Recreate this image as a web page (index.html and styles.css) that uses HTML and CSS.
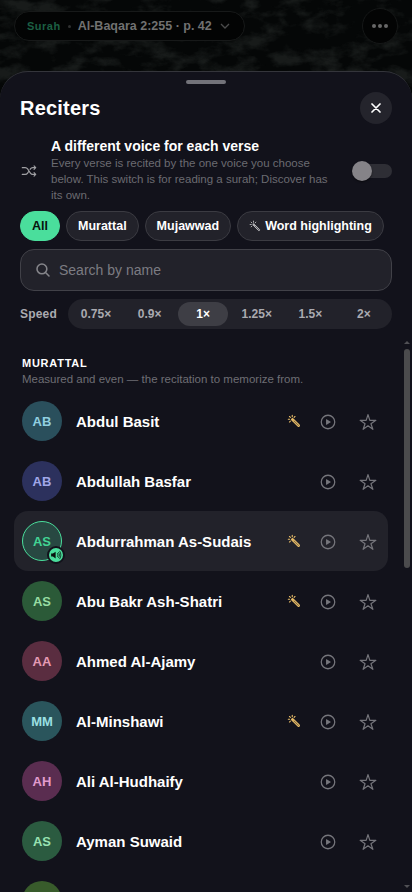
FILE: index.html
```
<!DOCTYPE html>
<html lang="en">
<head>
<meta charset="utf-8">
<meta name="viewport" content="width=device-width, initial-scale=1">
<title>Reciters</title>
<link rel="stylesheet" href="styles.css">
</head>
<body>
<svg class="defs" aria-hidden="true">
  <symbol id="play" viewBox="0 0 512 512"><path d="M448 256c0-106-86-192-192-192S64 150 64 256s86 192 192 192 192-86 192-192z" fill="none" stroke="currentColor" stroke-width="36"/><path fill="currentColor" d="M216.3 334.4l114.5-69.1a10.9 10.9 0 000-18.6l-114.5-69.1a10.8 10.8 0 00-16.3 9.3v138.2a10.8 10.8 0 0016.3 9.3z"/></symbol>
  <symbol id="star" viewBox="0 0 512 512"><path d="M480 208H308L256 48l-52 160H32l140 96-54 160 138-100 138 100-54-160z" fill="none" stroke="currentColor" stroke-width="34" stroke-linejoin="round"/></symbol>
  <symbol id="wand" viewBox="0 0 512 512"><g fill="none" stroke="currentColor" stroke-width="40" stroke-linecap="round"><rect x="280.5" y="122.9" width="63" height="378.2" rx="31.5" transform="rotate(-45 312 312)" fill="currentColor" fill-opacity=".4"/><path d="M48 192h48M90 90l34 34M192 48v48M294 90l-34 34M124 260l-34 34"/></g><path fill="currentColor" d="M178.4 178.4a31.6 31.6 0 000 44.7L223.3 268 268 223.3l-44.9-44.9a31.6 31.6 0 00-44.7 0z"/></symbol>
</svg>

<header class="backdrop">
  <svg class="texture" aria-hidden="true"><filter id="rock" x="0" y="0" width="100%" height="100%" color-interpolation-filters="sRGB"><feTurbulence type="fractalNoise" baseFrequency=".035 .06" numOctaves="5" seed="8"/><feColorMatrix values="0 0 0 0 .12  0 0 0 0 .135  0 0 0 0 .13  3.6 0 0 0 -1.6"/></filter><rect width="100%" height="100%" filter="url(#rock)"/></svg>
  <div class="place"><span class="place-kind">Surah</span><span class="place-dot"></span><span class="place-name">Al-Baqara 2:255 · p. 42</span><svg class="chevron" viewBox="0 0 10 10"><path d="M1 3l4 4 4-4"/></svg></div>
  <div class="more"><i></i><i></i><i></i></div>
</header>

<main class="sheet">
  <div class="handle"></div>
  <div class="heading"><h1>Reciters</h1><button class="close" aria-label="Close"><svg viewBox="0 0 10 10"><path d="M1 1l8 8M9 1l-8 8"/></svg></button></div>

  <section class="option">
    <svg class="shuffle" viewBox="0 0 512 512"><path d="M400 304l48 48-48 48M400 112l48 48-48 48M64 352h85.2a80 80 0 0066.5-35.6L256 256M64 160h85.2a80 80 0 0166.5 35.6l80.5 120.8A80 80 0 00362.8 352H416M416 160h-53.2a80 80 0 00-66.5 35.6L288 208"/></svg>
    <div class="option-text"><h2>A different voice for each verse</h2><p>Every verse is recited by the one voice you choose below. This switch is for reading a surah; Discover has its own.</p></div>
    <div class="switch"><i></i></div>
  </section>

  <nav class="chips">
    <button class="chip chip-on">All</button><button class="chip">Murattal</button><button class="chip">Mujawwad</button><button class="chip"><svg><use href="#wand"/></svg>Word highlighting</button>
  </nav>

  <div class="search"><svg viewBox="0 0 512 512"><path d="M221 64a157 157 0 10157 157A157 157 0 00221 64zM338 338l110 110"/></svg><span>Search by name</span></div>

  <div class="speed"><span class="speed-label">Speed</span>
    <div class="speeds"><span>0.75×</span><span>0.9×</span><span class="speed-on">1×</span><span>1.25×</span><span>1.5×</span><span>2×</span></div>
  </div>

  <div class="scroller">
    <section class="list">
      <h3>MURATTAL</h3>
      <p class="note">Measured and even — the recitation to memorize from.</p>
      <div class="row"><span class="avatar sea">AB</span><b>Abdul Basit</b><svg class="wand"><use href="#wand"/></svg><svg class="act"><use href="#play"/></svg><svg class="act"><use href="#star"/></svg></div>
      <div class="row"><span class="avatar indigo">AB</span><b>Abdullah Basfar</b><svg class="act"><use href="#play"/></svg><svg class="act"><use href="#star"/></svg></div>
      <div class="row row-on"><span class="avatar current">AS<span class="badge"><svg viewBox="0 0 512 512"><path d="M126 192H48v128h78l114 80V112z" fill="currentColor"/><path d="M320 320c10-19 16-41 16-64s-6-44-16-64M368 368c19-34 32-64 32-112s-12-78-32-112M416 416c30-46 48-91 48-160s-18-113-48-160" fill="none" stroke="currentColor" stroke-width="32" stroke-linecap="round"/></svg></span></span><b>Abdurrahman As-Sudais</b><svg class="wand"><use href="#wand"/></svg><svg class="act"><use href="#play"/></svg><svg class="act"><use href="#star"/></svg></div>
      <div class="row"><span class="avatar green">AS</span><b>Abu Bakr Ash-Shatri</b><svg class="wand"><use href="#wand"/></svg><svg class="act"><use href="#play"/></svg><svg class="act"><use href="#star"/></svg></div>
      <div class="row"><span class="avatar rose">AA</span><b>Ahmed Al-Ajamy</b><svg class="act"><use href="#play"/></svg><svg class="act"><use href="#star"/></svg></div>
      <div class="row"><span class="avatar teal">MM</span><b>Al-Minshawi</b><svg class="wand"><use href="#wand"/></svg><svg class="act"><use href="#play"/></svg><svg class="act"><use href="#star"/></svg></div>
      <div class="row"><span class="avatar plum">AH</span><b>Ali Al-Hudhaify</b><svg class="act"><use href="#play"/></svg><svg class="act"><use href="#star"/></svg></div>
      <div class="row"><span class="avatar emerald">AS</span><b>Ayman Suwaid</b><svg class="act"><use href="#play"/></svg><svg class="act"><use href="#star"/></svg></div>
      <div class="row"><span class="avatar olive"></span></div>
    </section>
    <div class="scrollbar"><i class="up"></i><i class="thumb"></i><i class="down"></i></div>
  </div>
</main>
</body>
</html>
```
FILE: styles.css
```
* { box-sizing: border-box; margin: 0; padding: 0; }
html, body { height: 100%; overflow: hidden; }
body {
  position: relative;
  width: 412px;
  height: 892px;
  display: flex;
  flex-direction: column;
  background: #050707;
  color: #fff;
  font-family: "Liberation Sans", Arial, sans-serif;
}
button { border: 0; font: inherit; color: inherit; }
svg { display: block; flex: none; }
.defs { position: absolute; width: 0; height: 0; }

.backdrop {
  height: 71px;
  flex: none;
  display: flex;
  justify-content: space-between;
  align-items: flex-start;
  padding: 8px 14px 0;
}
.texture { position: absolute; top: 0; left: 0; width: 412px; height: 110px; opacity: .75; }
.place {
  position: relative;
  height: 30px;
  width: 231px;
  margin-top: 3px;
  padding-left: 12px;
  display: flex;
  align-items: center;
  border: 1px solid #171919;
  border-radius: 15px;
  background: #030404;
  font-size: 12.5px;
  font-weight: 700;
  color: #717171;
}
.place-kind { color: #1c5f43; font-size: 11px; letter-spacing: .5px; }
.place-dot { width: 3px; height: 3px; margin: 0 7px; border-radius: 50%; background: #303131; }
.chevron { width: 10px; height: 10px; margin-left: 8px; fill: none; stroke: #4b4b4b; stroke-width: 1.3; }
.more {
  position: relative;
  width: 36px;
  height: 36px;
  display: flex;
  align-items: center;
  justify-content: center;
  gap: 2px;
  border: 1px solid #151717;
  border-radius: 50%;
  background: #030404;
}
.more i { width: 4px; height: 4px; border-radius: 50%; background: #686868; }

.sheet {
  position: relative;
  flex: 1;
  min-height: 0;
  display: flex;
  flex-direction: column;
  padding-top: 8px;
  border-top: 1px solid #34353b;
  border-radius: 28px 28px 0 0;
  background: #12121b;
}
.handle { width: 40px; height: 4px; flex: none; margin: 0 auto 8px; border-radius: 2px; background: #73737a; }
.heading { height: 32px; flex: none; display: flex; align-items: center; justify-content: space-between; padding: 0 20px; }
h1 { font-size: 20px; line-height: 24px; letter-spacing: .2px; }
.close { width: 32px; height: 32px; display: grid; place-items: center; border-radius: 50%; background: #24242c; }
.close svg { width: 10px; height: 10px; fill: none; stroke: #fff; stroke-width: 1.7; stroke-linecap: round; }

.option { height: 65px; flex: none; margin: 14px 20px 0; display: flex; align-items: center; }
.shuffle { width: 18px; height: 18px; margin-right: 13px; fill: none; stroke: #a0a0a4; stroke-width: 32; stroke-linecap: round; stroke-linejoin: round; }
.option-text { width: 286px; }
h2 { font-size: 14px; line-height: 17px; }
.option p { font-size: 11.5px; line-height: 16px; color: #6b6b71; }
.switch { width: 38px; height: 14px; margin-left: auto; border-radius: 7px; background: #2e2e35; }
.option .switch { display: flex; align-items: center; }
.switch i { width: 20px; height: 20px; flex: none; margin-left: -2px; border-radius: 50%; background: #858388; box-shadow: 0 1px 2px #0008; }

.chips { height: 30px; flex: none; margin: 8px 20px 0; display: flex; gap: 6px; }
.chip {
  height: 30px;
  padding: 0 11px;
  display: flex;
  align-items: center;
  gap: 4px;
  white-space: nowrap;
  border: 1px solid #3b3b42;
  border-radius: 15px;
  background: #22222a;
  font-size: 12.5px;
  font-weight: 700;
}
.chip-on { border-color: #4ade9c; background: #4ade9c; color: #08120d; }
.chip svg { width: 12px; height: 12px; color: #b5b5b8; }

.search {
  height: 42px;
  flex: none;
  margin: 8px 20px 0;
  padding-left: 14px;
  display: flex;
  align-items: center;
  gap: 8px;
  border: 1px solid #414148;
  border-radius: 14px;
  background: #22222a;
  color: #7c7c82;
  font-size: 14px;
}
.search svg { width: 16px; height: 16px; fill: none; stroke: #85858a; stroke-width: 50; stroke-linecap: round; }

.speed { height: 30px; flex: none; margin: 8px 20px 0; display: flex; align-items: center; justify-content: space-between; font-size: 12px; font-weight: 700; color: #aaaab0; }
.speed-label { letter-spacing: .2px; }
.speeds { width: 324px; height: 30px; padding: 3px; display: grid; grid-template-columns: repeat(6, 1fr); gap: 3.5px; border-radius: 15px; background: #22222a; }
.speeds span { display: grid; place-items: center; border-radius: 12px; }
.speeds .speed-on { background: #3e3e45; color: #fff; }

.scroller { flex: 1; min-height: 0; margin-top: 10px; display: flex; overflow: hidden; }
.list { width: 402px; padding: 17px 14px 0; }
h3 { padding-left: 8px; font-size: 11px; line-height: 15px; letter-spacing: .75px; }
.note { padding-left: 8px; height: 20px; font-size: 11.5px; line-height: 17px; color: #6e6e74; }
.row { height: 60px; display: flex; align-items: center; padding: 0 11.5px 0 8px; border-radius: 14px; }
.row b { margin: 0 auto 0 14px; padding-top: 2px; font-size: 15px; line-height: 20px; }
.row-on { background: #22222a; }
.avatar { position: relative; width: 40px; height: 40px; flex: none; display: grid; place-items: center; border-radius: 50%; font-size: 13px; font-weight: 700; }
.sea { background: #2a4f5c; color: #91cfe0; }
.indigo { background: #2c315d; color: #a0a7e8; }
.current { border: 1px solid #4ade9c; background: #284842; color: #42d494; }
.green { background: #2b5a38; color: #97dda3; }
.rose { background: #5a2d40; color: #e59ab4; }
.teal { background: #2a555c; color: #9be0e3; }
.plum { background: #5a2d50; color: #e29bcd; }
.emerald { background: #2b5b40; color: #98e2b2; }
.olive { background: #385b2b; }
.badge { position: absolute; right: -4px; bottom: -4px; width: 18px; height: 18px; display: grid; place-items: center; border: 2px solid #12121b; border-radius: 50%; background: #4ade9c; color: #08120d; }
.badge svg { width: 12px; height: 12px; }
.wand { width: 14px; height: 14px; margin-right: 18px; color: #e9bd68; }
.act { width: 18px; height: 18px; margin-top: 1.5px; color: #75757b; }
.act + .act { margin-left: 22px; }

.scrollbar { width: 10px; display: flex; flex-direction: column; align-items: center; }
.scrollbar i { flex: none; }
.up { margin-top: 2px; border: 3px solid transparent; border-top: 0; border-bottom-color: #505055; }
.thumb { width: 6px; height: 219px; margin-top: 5px; border-radius: 3px; background: #4b4b4d; }
.down { margin: auto 0 4px; border: 3px solid transparent; border-bottom: 0; border-top-color: #505055; }
```
